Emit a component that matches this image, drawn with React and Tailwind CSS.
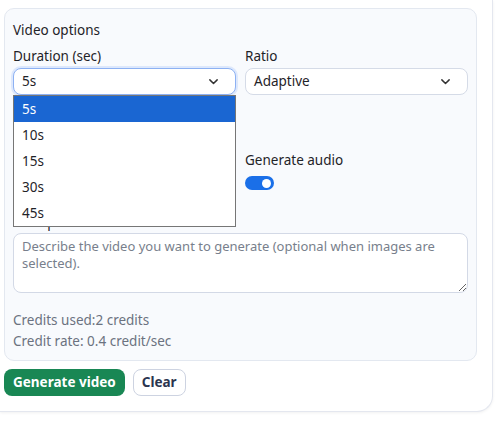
import { useState } from 'react';

const durations = ['5s', '10s', '15s', '30s', '45s'];

function Chevron() {
  return (
    <svg viewBox="0 0 16 16" className="h-[13px] w-[13px] text-[#333]" fill="none" stroke="currentColor" strokeWidth="1.8" strokeLinecap="round" strokeLinejoin="round">
      <path d="M3.5 6l4.5 4.5 4.5-4.5" />
    </svg>
  );
}

function FakeSelect({ value, focused }) {
  return (
    <div
      className={
        'flex h-[27px] items-center justify-between rounded-lg border bg-white pl-2 pr-[15px] text-[13.5px] text-[#1f2328] ' +
        (focused ? 'border-[#8db1f3] shadow-[0_0_0_2px_#dde8fc]' : 'border-[#d5dbe7]')
      }
    >
      <span>{value}</span>
      <Chevron />
    </div>
  );
}

export default function App() {
  const [audio, setAudio] = useState(true);
  const selected = '5s';

  return (
    <div className="h-[421px] w-[503px] bg-white" style={{ fontFamily: '"Noto Sans", "Noto Sans CJK KR", sans-serif' }}>
      <div className="h-[412px] w-[493px] rounded-br-2xl border-r border-b border-[#e4e7ef] bg-white pt-2 pl-1 pr-[15px] shadow-[0_1px_3px_rgba(0,0,0,0.06)]">
        <div className="rounded-[10px] border border-[#e3e8f0] bg-[#f8fafd] px-2 pt-[11px] pb-[8px]">
          <div className="h-[20px] text-[13.5px] leading-[20px] text-[#1f2328]">Video options</div>

          <div className="relative mt-[6px] grid grid-cols-2 gap-x-[9px]">
            <div>
              <div className="h-[20px] text-[13.5px] leading-[20px] text-[#1f2328]">Duration (sec)</div>
              <div className="mt-[2px]">
                <FakeSelect value={selected} focused />
              </div>
            </div>
            <div>
              <div className="h-[20px] text-[13.5px] leading-[20px] text-[#1f2328]">Ratio</div>
              <div className="mt-[2px]">
                <FakeSelect value="Adaptive" />
              </div>
            </div>

            <div className="mt-[55px]" />
            <div className="mt-[55px]">
              <div className="h-[20px] text-[13.5px] leading-[20px] text-[#1f2328]">Generate audio</div>
              <button
                type="button"
                onClick={() => setAudio(!audio)}
                className={'mt-[6px] mb-[13px] flex h-[14px] w-[29px] items-center rounded-full px-[3px] ' + (audio ? 'justify-end bg-[#1a6fe8]' : 'justify-start bg-[#cbd2dc]')}
              >
                <span className="h-[9px] w-[9px] rounded-full bg-white" />
              </button>
            </div>

            <ul className="absolute top-[49px] left-0 z-10 w-[223px] border border-[#767676] bg-white text-[13.5px] text-[#1f2328]">
              {durations.map((d) => (
                <li key={d} className={'flex h-[26px] items-center pl-2 ' + (d === selected ? 'bg-[#1a66d2] text-white' : '')}>
                  {d}
                </li>
              ))}
            </ul>
          </div>

          <div className="mt-[9px] h-[20px] text-[13.5px] leading-[20px] text-[#1f2328]">Prompt</div>
          <textarea
            className="mt-[1px] block h-[60px] w-full resize-y rounded-lg border border-[#d3d9e6] bg-white px-2 py-[4px] text-[13px] leading-[17px] text-[#1f2328] placeholder:text-[#787f8c] focus:outline-none"
            placeholder="Describe the video you want to generate (optional when images are selected)."
          />

          <div className="mt-[17px] text-[13.5px] leading-[21px] text-[#6b7280]">
            <div>Credits used:2 credits</div>
            <div>Credit rate: 0.4 credit/sec</div>
          </div>
        </div>

        <div className="mt-2 flex gap-2">
          <button type="button" className="h-[27px] rounded-lg bg-[#198754] px-[9px] text-[13.5px] font-bold text-white">
            Generate video
          </button>
          <button type="button" className="h-[27px] rounded-lg border border-[#cdd3e1] bg-white px-2 text-[13.5px] font-bold text-[#2b3550]">
            Clear
          </button>
        </div>
      </div>
    </div>
  );
}
